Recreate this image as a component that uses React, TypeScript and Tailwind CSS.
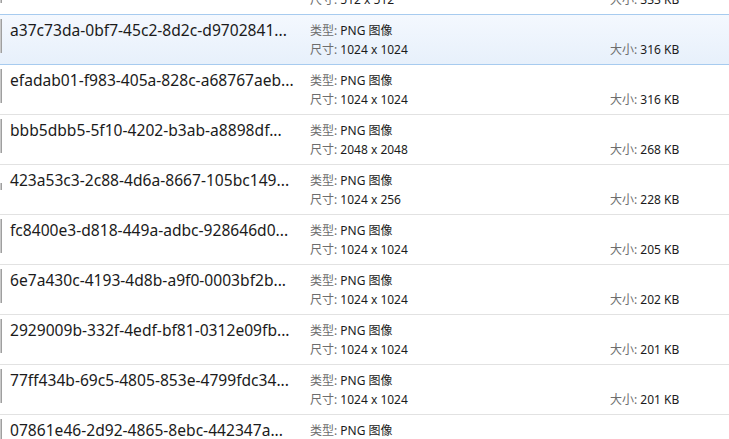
import React from 'react';

type FileRow = {
  name: string;
  dims: string;
  size: string;
  thumb: number; // visible height of the thumbnail edge
};

const files: FileRow[] = [
  { name: '', dims: '512 x 512', size: '333 KB', thumb: 34 },
  { name: 'a37c73da-0bf7-45c2-8d2c-d9702841...', dims: '1024 x 1024', size: '316 KB', thumb: 34 },
  { name: 'efadab01-f983-405a-828c-a68767aeb...', dims: '1024 x 1024', size: '316 KB', thumb: 34 },
  { name: 'bbb5dbb5-5f10-4202-b3ab-a8898df...', dims: '2048 x 2048', size: '268 KB', thumb: 34 },
  { name: '423a53c3-2c88-4d6a-8667-105bc149...', dims: '1024 x 256', size: '228 KB', thumb: 7 },
  { name: 'fc8400e3-d818-449a-adbc-928646d0...', dims: '1024 x 1024', size: '205 KB', thumb: 34 },
  { name: '6e7a430c-4193-4d8b-a9f0-0003bf2b...', dims: '1024 x 1024', size: '202 KB', thumb: 34 },
  { name: '2929009b-332f-4edf-bf81-0312e09fb...', dims: '1024 x 1024', size: '201 KB', thumb: 34 },
  { name: '77ff434b-69c5-4805-853e-4799fdc34...', dims: '1024 x 1024', size: '201 KB', thumb: 34 },
  { name: '07861e46-2d92-4865-8ebc-442347a...', dims: '1024 x 1024', size: '196 KB', thumb: 34 },
];

const SELECTED = 1;

function Row({ file, selected, afterSelected }: { file: FileRow; selected: boolean; afterSelected: boolean }) {
  const borderColor = selected || afterSelected ? 'border-[#a7cbef]' : 'border-[#e2e2e2]';
  const bg = selected ? 'bg-gradient-to-b from-[#f4f8fe] to-[#e7f0fb]' : 'bg-white';

  return (
    <div className={`h-[50px] border-t ${borderColor} ${bg} grid grid-cols-[10px_300px_300px_1fr]`}>
      {/* right edge of the thumbnail, scrolled out of view */}
      <div>
        <div
          className="w-[2px] bg-[#c9c9c9] border-r border-[#9f9f9f]"
          style={{ height: file.thumb, marginTop: 21 - file.thumb / 2 }}
        />
      </div>
      <div className="pt-[5px] text-[15.6px] leading-[20px] text-[#1b1b1b] whitespace-nowrap">
        {file.name}
      </div>
      <div className="pt-[6px] text-[12px] leading-[19px] whitespace-nowrap">
        <div>
          <span className="text-[#6d6d6d]">类型: </span>
          <span className="text-[#1b1b1b]">PNG 图像</span>
        </div>
        <div>
          <span className="text-[#6d6d6d]">尺寸: </span>
          <span className="text-[#1b1b1b]">{file.dims}</span>
        </div>
      </div>
      <div className="pt-[25px] text-[12px] leading-[19px] whitespace-nowrap">
        <span className="text-[#6d6d6d]">大小: </span>
        <span className="text-[#1b1b1b]">{file.size}</span>
      </div>
    </div>
  );
}

export default function App() {
  return (
    <div
      className="w-[729px] h-[439px] overflow-hidden bg-white"
      style={{ fontFamily: '"Noto Sans", "Noto Sans CJK SC", sans-serif' }}
    >
      <div className="mt-[-36px]">
        {files.map((f, i) => (
          <Row key={i} file={f} selected={i === SELECTED} afterSelected={i === SELECTED + 1} />
        ))}
      </div>
    </div>
  );
}
